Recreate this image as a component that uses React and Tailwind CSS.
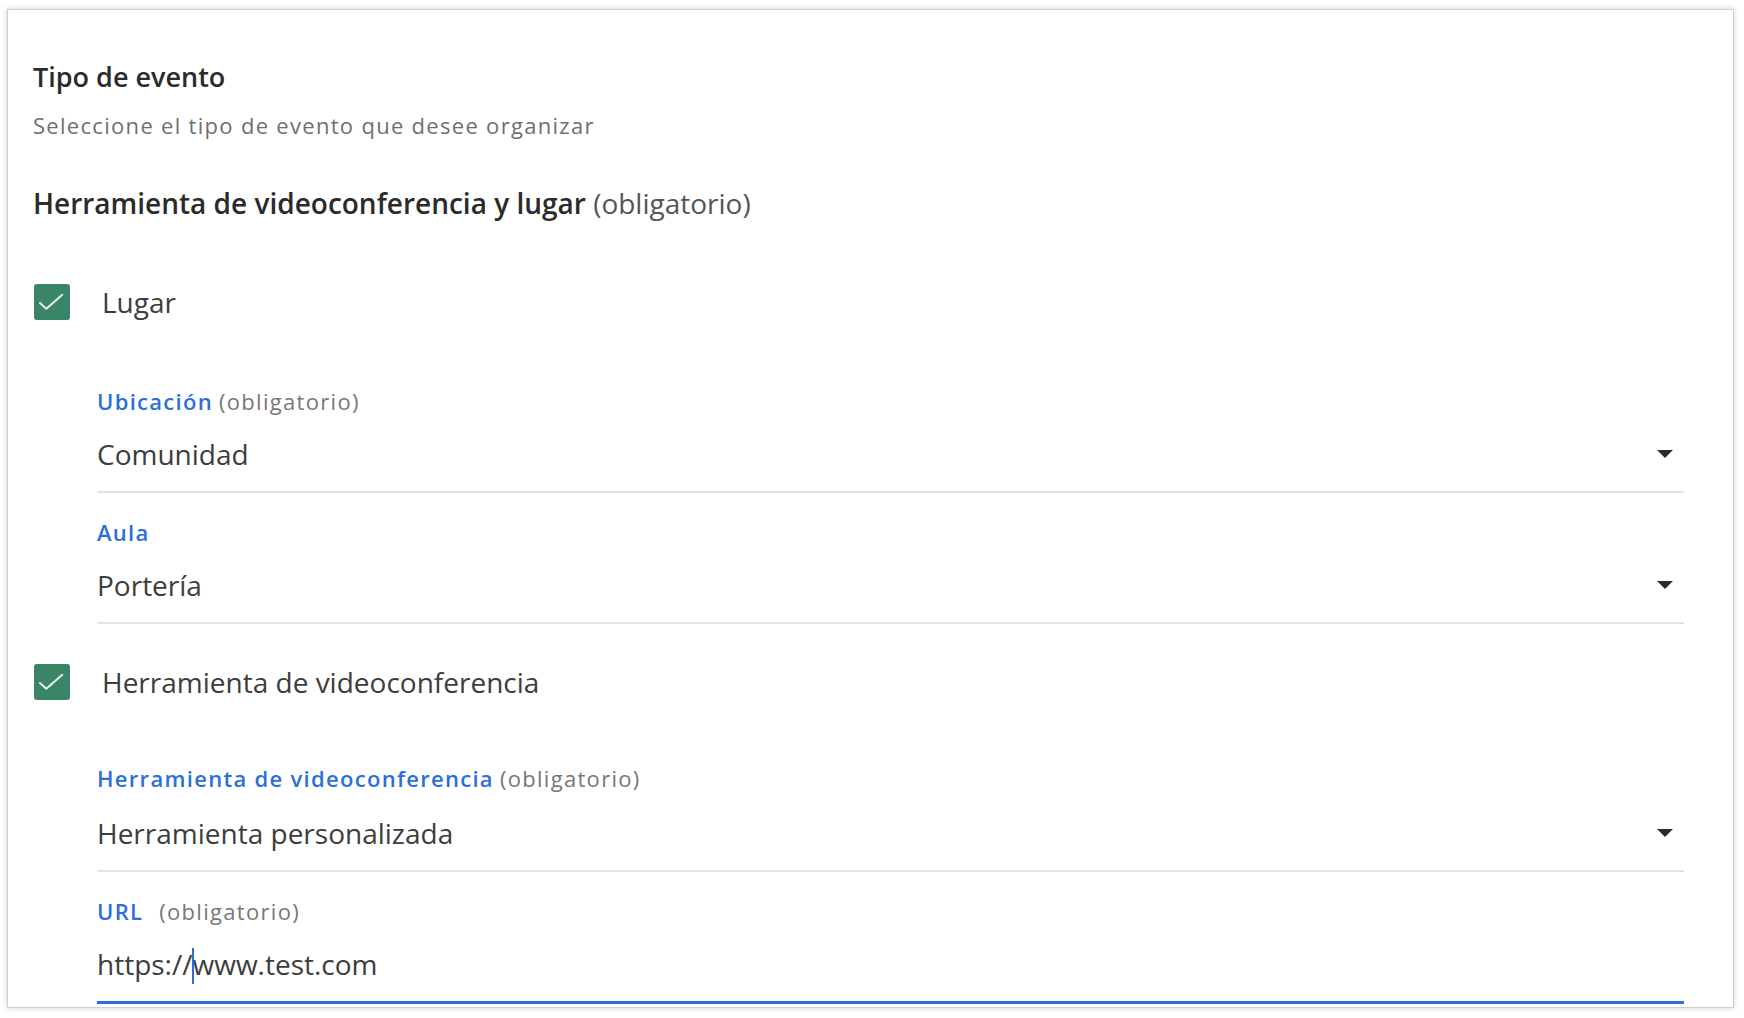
import React from "react";

const FONT = { fontFamily: '"Open Sans", "Noto Sans", sans-serif' };

function Checkbox() {
  return (
    <span className="ml-[1px] flex h-[36px] w-[36px] shrink-0 items-center justify-center rounded-[3px] bg-[#3a8566]">
      <svg viewBox="0 0 36 36" className="h-[36px] w-[36px]" aria-hidden="true">
        <path d="M6 19l6.3 5.7L28.3 10.7" fill="none" stroke="#e8f2ed" strokeWidth="2" strokeLinecap="round" strokeLinejoin="round" />
      </svg>
    </span>
  );
}

function CheckRow({ label }) {
  return (
    <div className="flex h-[36px] items-center gap-[32px]">
      <Checkbox />
      <span className="text-[28px] leading-[36px] text-[#3d3d3d]">{label}</span>
    </div>
  );
}

function Caret() {
  return (
    <svg viewBox="0 0 16 8" className="h-[8px] w-[16px]" aria-hidden="true">
      <path d="M0 0h16L8 8z" fill="#2b2b2b" />
    </svg>
  );
}

function Field({ label, required, gap = "ml-[6px]", value, select, focused, valueGap = "mt-[20px]" }) {
  return (
    <div className="flex flex-col">
      <div className="text-[22px] leading-[30px] tracking-[1.3px]">
        <span className="font-semibold text-[#2d6fd8]">{label}</span>
        {required && <span className={`${gap} text-[#777777]`}>(obligatorio)</span>}
      </div>
      <div
        className={`${valueGap} flex items-center justify-between pb-[19px] ${
          focused ? "border-b-[3px] border-[#2d6fd8]" : "border-b-2 border-[#e3e3e3]"
        }`}
      >
        {focused ? (
          <span className="text-[28px] leading-[36px] text-[#3d3d3d]">
            https://
            <span className="relative inline-block w-0">
              <span className="absolute left-[-1px] top-[-27px] h-[36px] w-[2px] bg-[#2d6fd8]" />
            </span>
            www.test.com
          </span>
        ) : (
          <span className="text-[28px] leading-[36px] text-[#3d3d3d]">{value}</span>
        )}
        {select && (
          <span className="mr-[11px] flex items-center">
            <Caret />
          </span>
        )}
      </div>
    </div>
  );
}

export default function App() {
  return (
    <div className="min-h-screen bg-white" style={FONT}>
      <div className="ml-[7px] mt-[9px] h-[999px] w-[1727px] border border-[#cfcfcf] bg-white shadow-[0_0_6px_rgba(0,0,0,0.18)]">
        <div className="pl-[25px] pr-[49px] pt-[50px]">
          <h2 className="text-[27px] font-semibold leading-[34px] text-[#2b2b2b]">Tipo de evento</h2>
          <p className="mt-[17px] text-[22px] leading-[28px] tracking-[1.3px] text-[#6f6f6f]">
            Seleccione el tipo de evento que desee organizar
          </p>
          <h3 className="mt-[46px] text-[28px] leading-[36px] text-[#2b2b2b]">
            <span className="font-semibold">Herramienta de videoconferencia y lugar</span>{" "}
            <span className="text-[#555555]">(obligatorio)</span>
          </h3>

          <div className="mt-[63px]">
            <CheckRow label="Lugar" />
          </div>

          <div className="ml-[64px] mt-[66px] flex flex-col gap-[24px]">
            <Field label="Ubicación" required value="Comunidad" select />
            <Field label="Aula" value="Portería" select />
          </div>

          <div className="mt-[40px]">
            <CheckRow label="Herramienta de videoconferencia" />
          </div>

          <div className="ml-[64px] mt-[63px] flex flex-col gap-[24px]">
            <Field
              label="Herramienta de videoconferencia"
              required
              value="Herramienta personalizada"
              select
              valueGap="mt-[22px]"
            />
            <Field label="URL" required gap="ml-[16px]" focused />
          </div>
        </div>
      </div>
    </div>
  );
}
